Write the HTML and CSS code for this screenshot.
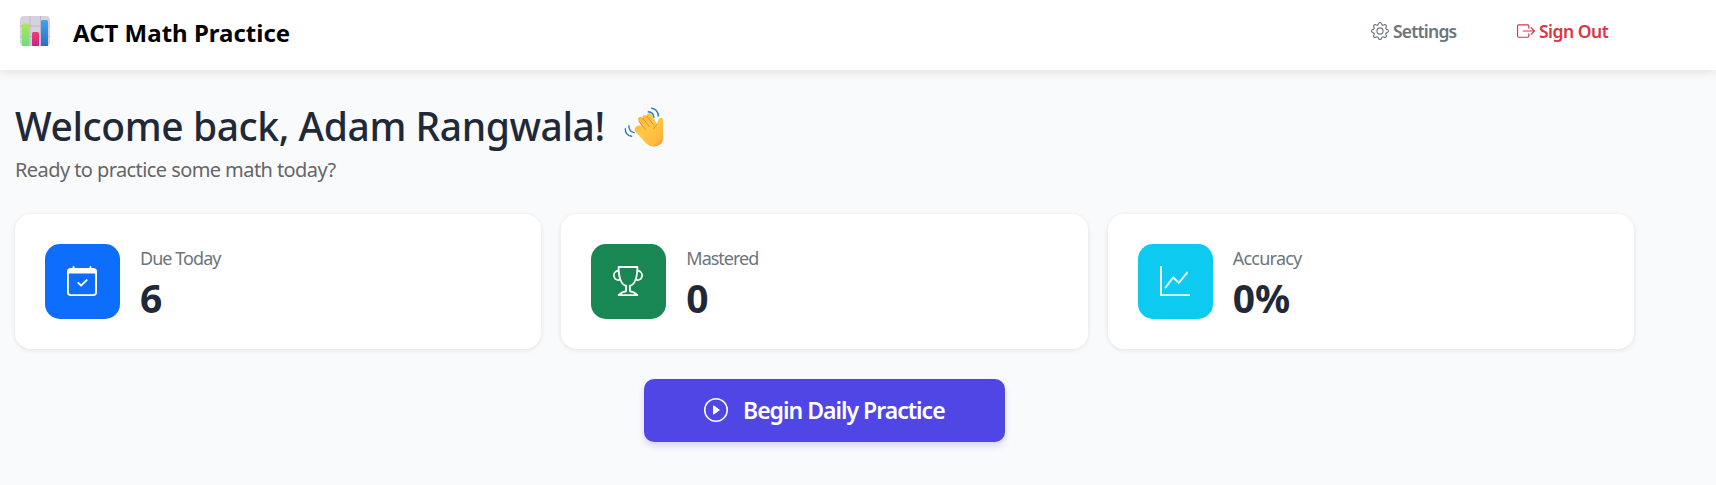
FILE: index.html
```html
<!DOCTYPE html>
<html lang="en">
<head>
<meta charset="utf-8">
<title>ACT Math Practice</title>
<link rel="stylesheet" href="styles.css">
</head>
<body>
<header class="navbar">
  <div class="brand">
    <svg class="brand-logo" viewBox="0 0 30 30" aria-hidden="true">
      <defs>
        <linearGradient id="green" x1="0" y1="0" x2="0" y2="1"><stop offset="0" stop-color="#b0e75c"/><stop offset="1" stop-color="#6edb7c"/></linearGradient>
        <linearGradient id="pink" x1="0" y1="0" x2="0" y2="1"><stop offset="0" stop-color="#f23a80"/><stop offset="1" stop-color="#c42a78"/></linearGradient>
        <linearGradient id="blue" x1="0" y1="0" x2="0" y2="1"><stop offset="0" stop-color="#3ea5f0"/><stop offset="1" stop-color="#2b70c4"/></linearGradient>
      </defs>
      <rect width="30" height="30" rx="4" fill="#d6d1de"/>
      <path d="M10 0v30M20.5 0v30M0 10h30M0 20.5h30" stroke="#bdb7c8" stroke-width="1"/>
      <path d="M2 30V9a1.5 1.5 0 0 1 1.5-1.5h4A1.5 1.5 0 0 1 9 9v21z" fill="url(#green)"/>
      <path d="M12 30V17.5a1.5 1.5 0 0 1 1.5-1.5h4a1.5 1.5 0 0 1 1.500 1.500V30z" fill="url(#pink)"/>
      <path d="M21 30V5.500A1.500 1.500 0 0 1 22.500 4h4A1.500 1.500 0 0 1 28 5.500V30z" fill="url(#blue)"/>
    </svg>
    <span class="brand-name">ACT Math Practice</span>
  </div>
  <nav class="nav-links">
    <a class="nav-link">
      <svg class="nav-icon" viewBox="0 0 16 16" fill="currentColor"><path d="M8 4.754a3.246 3.246 0 1 0 0 6.492 3.246 3.246 0 0 0 0-6.492M5.754 8a2.246 2.246 0 1 1 4.492 0 2.246 2.246 0 0 1-4.492 0"/><path d="M9.796 1.343c-.527-1.790-3.065-1.790-3.592 0l-.094.319a.873.873 0 0 1-1.255.520l-.292-.160c-1.640-.892-3.433.902-2.540 2.541l.159.292a.873.873 0 0 1-.520 1.255l-.319.094c-1.790.527-1.790 3.065 0 3.592l.319.094a.873.873 0 0 1 .520 1.255l-.160.292c-.892 1.640.901 3.434 2.541 2.540l.292-.159a.873.873 0 0 1 1.255.520l.094.319c.527 1.790 3.065 1.790 3.592 0l.094-.319a.873.873 0 0 1 1.255-.520l.292.160c1.640.893 3.434-.902 2.540-2.541l-.159-.292a.873.873 0 0 1 .520-1.255l.319-.094c1.790-.527 1.790-3.065 0-3.592l-.319-.094a.873.873 0 0 1-.520-1.255l.160-.292c.893-1.640-.902-3.433-2.541-2.540l-.292.159a.873.873 0 0 1-1.255-.520zm-2.633.283c.246-.835 1.428-.835 1.674 0l.094.319a1.873 1.873 0 0 0 2.693 1.115l.291-.160c.764-.415 1.600.420 1.184 1.185l-.159.292a1.873 1.873 0 0 0 1.116 2.692l.318.094c.835.246.835 1.428 0 1.674l-.319.094a1.873 1.873 0 0 0-1.115 2.693l.160.291c.415.764-.420 1.600-1.185 1.184l-.291-.159a1.873 1.873 0 0 0-2.693 1.116l-.094.318c-.246.835-1.428.835-1.674 0l-.094-.319a1.873 1.873 0 0 0-2.692-1.115l-.292.160c-.764.415-1.600-.420-1.184-1.185l.159-.291A1.873 1.873 0 0 0 1.945 8.930l-.319-.094c-.835-.246-.835-1.428 0-1.674l.319-.094A1.873 1.873 0 0 0 3.060 4.377l-.160-.292c-.415-.764.420-1.600 1.185-1.184l.292.159a1.873 1.873 0 0 0 2.692-1.115z"/></svg>
      <span class="nav-text nav-text-settings">Settings</span>
    </a>
    <a class="nav-link nav-link-danger">
      <svg class="nav-icon" viewBox="0 0 16 16" fill="currentColor"><path fill-rule="evenodd" d="M10 12.500a.5.5 0 0 1-.5.5h-8a.5.5 0 0 1-.5-.5v-9a.5.5 0 0 1 .5-.5h8a.5.5 0 0 1 .5.5v2a.5.5 0 0 0 1 0v-2A1.500 1.500 0 0 0 9.500 2h-8A1.500 1.500 0 0 0 0 3.500v9A1.500 1.500 0 0 0 1.500 14h8a1.500 1.500 0 0 0 1.500-1.500v-2a.5.5 0 0 0-1 0z"/><path fill-rule="evenodd" d="M15.854 8.354a.5.5 0 0 0 0-.708l-3-3a.5.5 0 0 0-.708.708L14.293 7.500H5.500a.5.5 0 0 0 0 1h8.793l-2.147 2.146a.5.5 0 0 0 .708.708z"/></svg>
      <span class="nav-text nav-text-signout">Sign Out</span>
    </a>
  </nav>
</header>
<main class="page">
  <h1 class="welcome">
    <span class="welcome-text">Welcome back, Adam Rangwala!</span>
    <svg class="wave" viewBox="0 0 40 40" aria-hidden="true">
      <defs>
        <linearGradient id="skin" x1="0" y1="0" x2="1" y2="1"><stop offset="0" stop-color="#f3b13c"/><stop offset=".45" stop-color="#ffc843"/><stop offset=".8" stop-color="#ffba3e"/><stop offset="1" stop-color="#f3884f"/></linearGradient>
      </defs>
      <path d="M11.500 20.200c-1.300 1.400-1.300 3 0 4.600l10.300 11.300c4.500 4.900 11.800 4.400 15.400.5 1.700-1.900 1.800-4 1.800-6.600V12.300c-.7-1.800-3.600-2-4.600.3l-1.500 4.300L27.200 7.200c-1.700-2.200-5-.5-4.200 2l-.4-.5c-2.200-2-5.200.3-3.700 2.700l-.8-.9c-2.300-2-5.100.6-3.700 3.100l2.900 5.600c-2-1.400-4.200-.8-5.800 1z" fill="url(#skin)"/>
      <path d="M23 9.200l6.200 8.300M18.900 11.400l6.500 8.100M14.900 14.200l6.800 8.500M33.400 16.900c-.8 1.500-2.900 2-3.700 4.800" fill="none" stroke="#dd8b2d" stroke-width=".9" stroke-linecap="round"/>
      <path d="M24.300 4.700c3.200.3 5.300 2.600 5.600 5.600M27.600 1.200c4 .6 6.500 3.600 6.800 7.900M4.900 18.600c-.2 3.500 2 6.200 5.300 7M1.300 21.600c-.2 4.200 2.300 7 6.300 7.700" fill="none" stroke="#277fc0" stroke-width="1.400" stroke-linecap="round"/>
    </svg>
  </h1>
  <p class="subtitle">Ready to practice some math today?</p>
  <section class="stats">
    <article class="card">
      <div class="tile tile-blue"><svg class="tile-icon" viewBox="0 0 16 16" fill="currentColor"><path d="M10.854 7.146a.5.5 0 0 1 0 .708l-3 3a.5.5 0 0 1-.708 0l-1.500-1.500a.5.5 0 1 1 .708-.708L7.500 9.793l2.646-2.647a.5.5 0 0 1 .708 0"/><path d="M3.500 0a.5.5 0 0 1 .5.5V1h8V.5a.5.5 0 0 1 1 0V1h1a2 2 0 0 1 2 2v11a2 2 0 0 1-2 2H2a2 2 0 0 1-2-2V3a2 2 0 0 1 2-2h1V.5a.5.5 0 0 1 .5-.5M1 4v10a1 1 0 0 0 1 1h12a1 1 0 0 0 1-1V4z"/></svg></div>
      <div class="stat"><span class="label label-due">Due Today</span><span class="value">6</span></div>
    </article>
    <article class="card">
      <div class="tile tile-green"><svg class="tile-icon" viewBox="0 0 16 16" fill="currentColor"><path d="M2.500.5A.5.5 0 0 1 3 0h10a.5.5 0 0 1 .5.5q0 .807-.034 1.536a3 3 0 1 1-1.133 5.890c-.790 1.865-1.878 2.777-2.833 3.011v2.173l1.425.356c.194.048.377.135.537.255L13.300 15.100a.5.5 0 0 1-.3.9H3a.5.5 0 0 1-.3-.9l1.838-1.379c.160-.120.343-.207.537-.255L6.500 13.110v-2.173c-.955-.234-2.043-1.146-2.833-3.012a3 3 0 1 1-1.132-5.890A33 33 0 0 1 2.500.5m.099 2.540a2 2 0 0 0 .720 3.935c-.333-1.050-.588-2.346-.720-3.935m10.083 3.935a2 2 0 0 0 .720-3.935c-.133 1.590-.388 2.885-.720 3.935M3.504 1q.01.775.056 1.469c.130 2.028.457 3.546.870 4.667C5.294 9.480 6.484 10 7 10a.5.5 0 0 1 .5.5v2.610a1 1 0 0 1-.757.970l-1.426.356a.5.5 0 0 0-.179.085L4.500 15h7l-.638-.479a.5.5 0 0 0-.180-.085l-1.425-.356a1 1 0 0 1-.757-.970V10.500A.5.5 0 0 1 9 10c.516 0 1.706-.520 2.570-2.864.413-1.120.740-2.640.870-4.667q.045-.694.056-1.469z"/></svg></div>
      <div class="stat"><span class="label label-mastered">Mastered</span><span class="value">0</span></div>
    </article>
    <article class="card">
      <div class="tile tile-cyan"><svg class="tile-icon" viewBox="0 0 16 16" fill="currentColor"><path fill-rule="evenodd" d="M0 0h1v15h15v1H0zm14.817 3.113a.5.5 0 0 1 .070.704l-4.500 5.500a.5.5 0 0 1-.740.037L7.060 6.767l-3.656 5.027a.5.5 0 0 1-.808-.588l4-5.500a.5.5 0 0 1 .758-.060l2.609 2.610 4.150-5.073a.5.5 0 0 1 .704-.070"/></svg></div>
      <div class="stat"><span class="label label-accuracy">Accuracy</span><span class="value">0%</span></div>
    </article>
  </section>
  <button class="begin" type="button">
    <svg class="begin-icon" viewBox="0 0 16 16" fill="currentColor"><path d="M8 15A7 7 0 1 1 8 1a7 7 0 0 1 0 14m0 1A8 8 0 1 0 8 0a8 8 0 0 0 0 16"/><path d="M6.271 5.055a.5.5 0 0 1 .520.038l3.500 2.500a.5.5 0 0 1 0 .814l-3.500 2.500A.5.5 0 0 1 6 10.500v-5a.5.5 0 0 1 .271-.445"/></svg>
    <span class="begin-text">Begin Daily Practice</span>
  </button>
</main>
</body>
</html>
```
FILE: styles.css
```css
* { box-sizing: border-box; }
body {
  margin: 0;
  min-height: 100vh;
  background: #f9fafc;
  color: #1f2937;
  font-family: "Noto Sans", "Open Sans", sans-serif;
  white-space: nowrap;
  overflow: hidden;
}
.navbar {
  height: 70px;
  padding: 0 106px 0 20px;
  display: flex;
  justify-content: space-between;
  background: #fff;
  box-shadow: 0 2px 10px rgba(0, 0, 0, .1);
}
.brand { display: flex; gap: 23px; padding-top: 16px; }
.brand-logo { width: 30px; height: 30px; }
.brand-name {
  color: #000;
  font-size: 24px;
  font-weight: 700;
  line-height: 30px;
  padding-top: 2px;
}
.nav-links { display: flex; gap: 59px; padding-top: 17px; }
.nav-link { display: flex; height: 28px; gap: 4px; color: #6c757d; }
.nav-link-danger { color: #dc3545; }
.nav-icon { width: 18px; height: 18px; margin-top: 5px; }
.nav-text { font-size: 17.5px; font-weight: 600; line-height: 28px; }
.nav-text-settings { width: 65px; letter-spacing: -.8px; }
.nav-text-signout { width: 71px; letter-spacing: -.5px; }
.page { width: 1634px; padding: 31px 0 0 15px; display: flex; flex-direction: column; }
.welcome { margin: 0; display: flex; height: 49px; gap: 18px; font-weight: 500; font-size: 39px; line-height: 50px; }
.welcome-text { width: 591px; letter-spacing: -.42px; }
.wave { width: 40px; height: 40px; margin-top: 6px; }
.subtitle { margin: 5px 0 29px; font-size: 20px; line-height: 30px; color: #666; letter-spacing: -.58px; }
.stats { display: grid; grid-template-columns: repeat(3, 1fr); gap: 20px; }
.card {
  display: flex;
  gap: 20px;
  height: 135px;
  padding: 30px;
  border-radius: 16px;
  background: #fff;
  box-shadow: 0 1px 5px rgba(0, 0, 0, .1);
}
.tile { display: grid; place-items: center; width: 75px; height: 75px; border-radius: 15px; color: #fff; }
.tile-blue { background: #0d6efd; }
.tile-green { background: #198754; }
.tile-cyan { background: #0dcaf0; }
.tile-icon { width: 30px; height: 30px; margin: 0 1px 1px 0; }
.stat { display: flex; flex-direction: column; }
.label { font-size: 18px; line-height: 28px; color: #6c757d; letter-spacing: -.95px; }
.label-mastered { letter-spacing: -1px; }
.label-accuracy { letter-spacing: -.75px; }
.value { font-size: 39px; font-weight: 700; line-height: 51px; }
.begin {
  align-self: center;
  display: flex;
  gap: 15px;
  width: 361px;
  height: 63px;
  margin-top: 30px;
  padding: 0 0 0 60px;
  border: 0;
  border-radius: 10px;
  background: #4f46e5;
  color: #fff;
  font: 600 23px/63px "Noto Sans", "Open Sans", sans-serif;
  letter-spacing: -1px;
  box-shadow: 0 4px 6px rgba(79, 70, 229, .2);
}
.begin-icon { width: 24px; height: 24px; margin-top: 19px; }
```
